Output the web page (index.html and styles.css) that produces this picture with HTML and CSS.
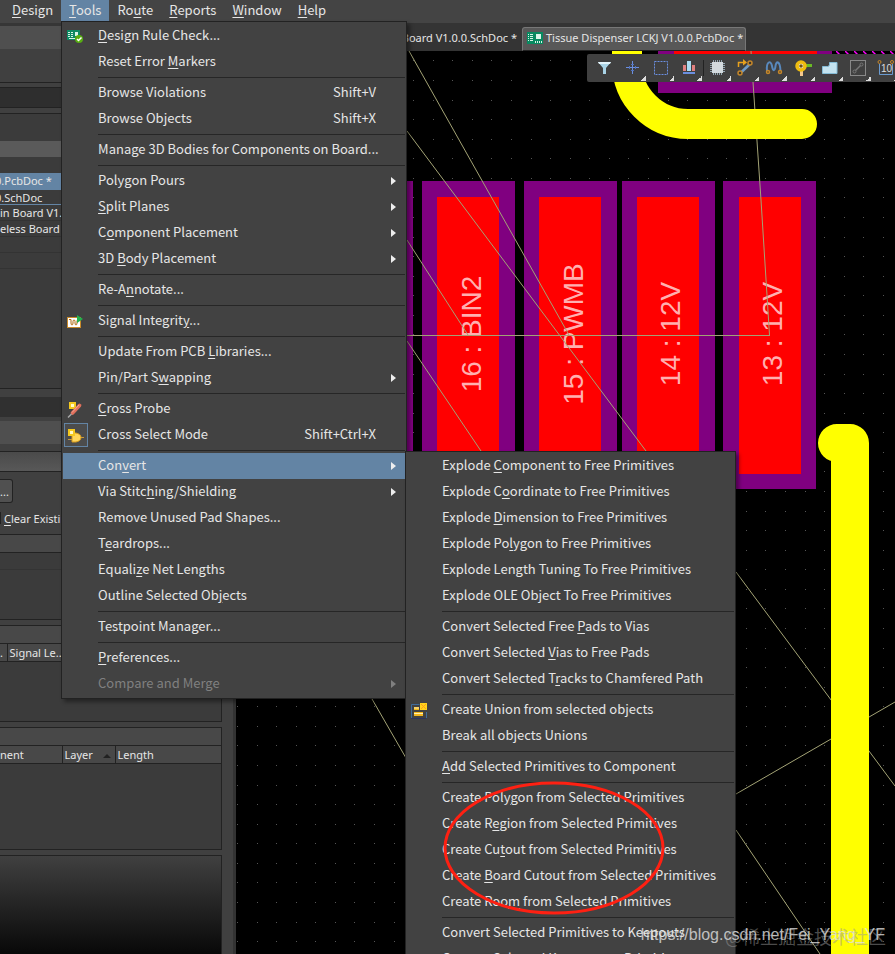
FILE: index.html
```html
<!DOCTYPE html>
<html lang="en">
<head>
<meta charset="utf-8">
<title>PCB Editor</title>
<link rel="stylesheet" href="styles.css">
</head>
<body>
<nav class="menubar">
  <button class="menubar-btn"><u>D</u>esign</button>
  <div class="menubar-slot">
    <button class="menubar-btn open"><u>T</u>ools</button>
    <ul class="menu tools-menu">
      <li><button class="item"><svg class="ico" viewBox="0 0 16 16"><rect y="1" width="13" height="10" fill="#0c8a62"/><path d="M1 3.500h2M1 5.500h2M1 7.500h2M4 3.500h2M4 5.500h2M4 7.500h2M2 9.500h6" stroke="#d8f5e8"/><rect x="8" y="3" width="3" height="4" fill="#d8f5e8"/><circle cx="12" cy="10" r="4" fill="#57ad12"/><path d="M10 10l1.500 1.500 3-3" stroke="#fff" stroke-width="1.500" fill="none"/></svg><span class="label"><u>D</u>esign Rule Check...</span></button></li>
      <li><button class="item"><span class="label">Reset Error <u>M</u>arkers</span></button></li>
      <li class="sep"></li>
      <li><button class="item"><span class="label">Browse Violations</span><span class="key">Shift+V</span></button></li>
      <li><button class="item"><span class="label">Browse Objects</span><span class="key">Shift+X</span></button></li>
      <li class="sep"></li>
      <li><button class="item"><span class="label">Manage 3D Bodies for Components on Board...</span></button></li>
      <li class="sep"></li>
      <li><button class="item sub"><span class="label">Poly<u>g</u>on Pours</span></button></li>
      <li><button class="item sub"><span class="label"><u>S</u>plit Planes</span></button></li>
      <li><button class="item sub"><span class="label">C<u>o</u>mponent Placement</span></button></li>
      <li><button class="item sub"><span class="label">3D <u>B</u>ody Placement</span></button></li>
      <li class="sep"></li>
      <li><button class="item"><span class="label">Re-A<u>n</u>notate...</span></button></li>
      <li class="sep"></li>
      <li><button class="item"><svg class="ico" viewBox="0 0 16 16"><rect x=".5" y="3.500" width="13" height="10" fill="#fff" stroke="#c98a2b"/><path d="M2 5.500h2V9q0 2 1 2t1-2V7.500Q6 6 7 6t1 1.500V9q0 2 1 2t1-2V6.500" fill="none" stroke="#b06a10"/><path d="M10 1l6 4-6 4z" fill="#23b14d"/></svg><span class="label">Signal Integrit<u>y</u>...</span></button></li>
      <li class="sep"></li>
      <li><button class="item"><span class="label">Update From PCB <u>L</u>ibraries...</span></button></li>
      <li><button class="item sub"><span class="label">Pin/Part S<u>w</u>apping</span></button></li>
      <li class="sep"></li>
      <li><button class="item"><svg class="ico" viewBox="0 0 16 16"><rect x="2" y="0" width="7" height="7" fill="#f4c81e"/><rect x="4" y="2" width="3" height="3" fill="#fff8c8"/><path d="M12.500 3.500L5.500 11" stroke="#e0705c" stroke-width="3.600" stroke-linecap="round"/><path d="M12 3L5 10.500" stroke="#f3a596"/><path d="M4.500 12L1 15.500" stroke="#aaa" stroke-width="1.400"/></svg><span class="label"><u>C</u>ross Probe</span></button></li>
      <li><button class="item"><span class="toggled"><svg viewBox="0 0 16 16"><path d="M0 12.500h4M12 10.500h4" stroke="#c99a3c"/><path d="M4 6h4q5 1 5 4.500T8 15H4z" fill="#ffd65a" stroke="#d69a1c"/><rect x="0" y="2" width="7" height="7" fill="#f4c81e"/><rect x="2" y="4" width="3" height="3" fill="#fff8c8"/></svg></span><span class="label">Cross Select Mode</span><span class="key">Shift+Ctrl+X</span></button></li>
      <li class="sep"></li>
      <li class="parent"><button class="item sub active"><span class="label">Con<u>v</u>ert</span></button>
        <ul class="menu convert-menu">
          <li><button class="item"><span class="label">Explode <u>C</u>omponent to Free Primitives</span></button></li>
          <li><button class="item"><span class="label">Explode C<u>o</u>ordinate to Free Primitives</span></button></li>
          <li><button class="item"><span class="label">Explode <u>D</u>imension to Free Primitives</span></button></li>
          <li><button class="item"><span class="label">Explode Po<u>l</u>ygon to Free Primitives</span></button></li>
          <li><button class="item"><span class="label">Explode Length Tuning To Free Primitives</span></button></li>
          <li><button class="item"><span class="label">Explode OLE Object To Free Primitives</span></button></li>
          <li class="sep"></li>
          <li><button class="item"><span class="label">Convert Selected Free <u>P</u>ads to Vias</span></button></li>
          <li><button class="item"><span class="label">Convert Selected <u>V</u>ias to Free Pads</span></button></li>
          <li><button class="item"><span class="label">Convert Selected T<u>r</u>acks to Chamfered Path</span></button></li>
          <li class="sep"></li>
          <li><button class="item"><svg class="ico" viewBox="0 0 16 16"><path d="M.500 15V1.500h8M15.500 9v6" fill="none" stroke="#3f6c9c"/><path d="M0 15.500h15" stroke="#2b3460"/><rect x="3" y="4" width="5" height="3" fill="#f2b61e"/><rect x="3" y="9" width="9" height="4" fill="#f2b61e"/><path d="M3 5h5M3 10.500h9" stroke="#fff0b0"/><rect x="9" y="0" width="7" height="7" fill="#ffd41c"/><path d="M10 1l5 5M15 1l-5 5" stroke="#ff9d1c"/></svg><span class="label">Create Union from selected objects</span></button></li>
          <li><button class="item"><span class="label">Break all objects Unions</span></button></li>
          <li class="sep"></li>
          <li><button class="item"><span class="label"><u>A</u>dd Selected Primitives to Component</span></button></li>
          <li class="sep"></li>
          <li><button class="item"><span class="label">Create Poly<u>g</u>on from Selected Primitives</span></button></li>
          <li><button class="item"><span class="label">Create R<u>e</u>gion from Selected Primitives</span></button></li>
          <li><button class="item"><span class="label">Create Cu<u>t</u>out from Selected Primitives</span></button></li>
          <li><button class="item"><span class="label">Create <u>B</u>oard Cutout from Selected Primitives</span></button></li>
          <li><button class="item"><span class="label">Create Roo<u>m</u> from Selected Primitives</span></button></li>
          <li class="sep"></li>
          <li><button class="item"><span class="label">Convert Selected Primitives to Keepouts</span></button></li>
          <li><button class="item"><span class="label">Convert Selected Keepouts to Primitives</span></button></li>
        </ul>
      </li>
      <li><button class="item sub"><span class="label">Via Stitc<u>h</u>ing/Shielding</span></button></li>
      <li><button class="item"><span class="label">Remove Unused Pad Shapes...</span></button></li>
      <li><button class="item"><span class="label">T<u>e</u>ardrops...</span></button></li>
      <li><button class="item"><span class="label">Equali<u>z</u>e Net Lengths</span></button></li>
      <li><button class="item"><span class="label">Outline Selected Ob<u>j</u>ects</span></button></li>
      <li class="sep"></li>
      <li><button class="item"><span class="label">Testpoint Manager...</span></button></li>
      <li class="sep"></li>
      <li><button class="item"><span class="label"><u>P</u>references...</span></button></li>
      <li><button class="item sub" disabled><span class="label">Compare and Merge</span></button></li>
    </ul>
  </div>
  <button class="menubar-btn">Ro<u>u</u>te</button>
  <button class="menubar-btn"><u>R</u>eports</button>
  <button class="menubar-btn"><u>W</u>indow</button>
  <button class="menubar-btn"><u>H</u>elp</button>
</nav>

<div class="workspace">
  <aside class="side">
    <div class="panels">
      <div class="band"></div>
      <div class="strip"></div>
      <div class="dark-box"></div>
      <section class="projects">
        <div class="grey-row"></div>
        <ul class="files">
          <li class="selected">0.PcbDoc *</li>
          <li class="current">0.SchDoc</li>
          <li class="child">in Board V1.0</li>
          <li class="child">eless Board</li>
          <li></li>
          <li></li>
        </ul>
      </section>
      <div class="search"></div>
      <div class="title-row"></div>
      <div class="gradient-row"></div>
      <div class="controls">
        <button class="more">...</button>
        <label class="check"><input type="checkbox"><span><u>C</u>lear Existing</span></label>
      </div>
      <section class="grid-box classes"><div class="grid-head"></div><div class="grid-line"></div></section>
      <section class="grid-box nets"><div class="grid-head"></div>
        <table><tr><th class="n1">.</th><th>Signal Le...</th></tr></table>
      </section>
      <section class="grid-box prims"><div class="grid-head"></div>
        <table><tr><th class="p1">nent</th><th class="p2">Layer<span class="sort"></span></th><th>Length</th></tr></table>
      </section>
      <div class="preview"></div>
    </div>
  </aside>

  <main class="editor">
    <div class="tabs">
      <button class="tab first">Main Board V1.0.0.SchDoc *</button>
      <button class="tab on"><svg viewBox="0 0 16 12"><rect width="16" height="12" fill="#078a60"/><path d="M1 2.500h1M1 4.500h1M1 6.500h1M1 8.500h1M3 2.500h3M3 4.500h3M3 6.500h3M3 8.500h3" stroke="#d8f5e8"/><path d="M8 10h7" stroke="#d8f5e8" stroke-width="2" stroke-dasharray="1 1"/><rect x="9" y="2" width="5" height="5" fill="#d8f5e8"/></svg>Tissue Dispenser LCKJ V1.0.0.PcbDoc *</button>
    </div>
    <div class="board">
      <svg class="pcb">
        <defs>
          <pattern id="dots" x="237" y="80" width="137" height="137" patternUnits="userSpaceOnUse">
            <path d="M0 .5H137M0 20.500H137M0 39.500H137M0 59.500H137M0 78.500H137M0 98.500H137M0 117.500H137" stroke="#555" stroke-dasharray="1 19 1 18 1 19 1 18 1 19 1 18 1 19"/>
          </pattern>
          <pattern id="hatch" x="836" y="51" width="9" height="9" patternUnits="userSpaceOnUse"><path d="M0 0l5 5" stroke="#f0f" stroke-width="1.500"/></pattern>
        </defs>
        <g transform="translate(-236 -51)">
          <rect x="236" y="51" width="2000" height="2000" fill="url(#dots)"/>
          <rect x="836" y="51" width="600" height="4" fill="url(#hatch)"/>
          <g fill="#800080">
            <rect x="658" y="40" width="174" height="53"/>
            <rect x="320" y="181" width="93" height="308"/>
            <rect x="422" y="181" width="93" height="308"/>
            <rect x="524" y="181" width="93" height="308"/>
            <rect x="622" y="181" width="93" height="308"/>
            <rect x="723" y="181" width="93" height="308"/>
          </g>
          <g fill="#f00">
            <rect x="674" y="40" width="143" height="38"/>
            <rect x="437" y="197" width="62" height="277"/>
            <rect x="539" y="197" width="62" height="277"/>
            <rect x="637" y="197" width="62" height="277"/>
            <rect x="739" y="197" width="62" height="277"/>
          </g>
          <g class="pad-name">
            <text transform="translate(481 334) rotate(-90)">16 : BIN2</text>
            <text transform="translate(583 334) rotate(-90)">15 : PWMB</text>
            <text transform="translate(680 334) rotate(-90)">14 : 12V</text>
            <text transform="translate(782 334) rotate(-90)">13 : 12V</text>
          </g>
          <path d="M409 51L569 335M407 131L646 451M407 240L468 335M407 341L481 451M400 335.500H770M751 51L753 82L761 200L769.500 335M372 699L406 758M736 572L895 786M736 794L895 702M736 830L820 954" fill="none" stroke="#a3a375"/>
          <path d="M627 40V63A61 61 0 0 0 688 124H802" fill="none" stroke="#ff0" stroke-width="30" stroke-linecap="round"/>
          <path d="M837 443H850V2000" fill="none" stroke="#ff0" stroke-width="38" stroke-linecap="round" stroke-linejoin="round"/>
        </g>
      </svg>
      <div class="toolbar">
        <button aria-label="Filter"><svg viewBox="0 0 28 28"><path d="M7 8h13l-5 6v6h-3v-6z" fill="#a9d3e6"/><path d="M7 8h13l-1 2H8z" fill="#e2f3fa"/></svg></button>
        <button class="more-tools" aria-label="Snap"><svg viewBox="0 0 28 28"><path d="M7 13.500h13M13.500 7v13" stroke="#6b8fe0"/><path d="M10.500 12v3M16.500 12v3M12 10.500h3M12 16.500h3" stroke="#5273bd"/></svg></button>
        <button class="more-tools" aria-label="Select"><svg viewBox="0 0 28 28"><rect x="7.500" y="7.500" width="13" height="13" fill="none" stroke="#6b8fe0" stroke-dasharray="2 1"/></svg></button>
        <button class="more-tools" aria-label="Align"><svg viewBox="0 0 28 28"><path d="M8 11h3v6H8zM17 11h3v6h-3z" fill="#e08080"/><path d="M12 7h4v10h-4z" fill="#a9dcf2"/><path d="M8 18h12v2H8z" fill="#6b8fe0"/></svg></button>
        <span class="tool-sep"></span>
        <button class="more-tools" aria-label="Place component"><svg viewBox="0 0 28 28"><path d="M9.500 6v15M11.500 6v15M13.500 6v15M15.500 6v15M17.500 6v15M6 9.500h15M6 11.500h15M6 13.500h15M6 15.500h15M6 17.500h15" stroke="#93a5b0"/><rect x="8" y="8" width="11" height="11" fill="#d3dade"/></svg></button>
        <button class="more-tools" aria-label="Route"><svg viewBox="0 0 28 28"><path d="M6.500 13V8.500H12" fill="none" stroke="#e8a21c" stroke-width="1.500"/><path d="M11 5l4 3.500-4 3z" fill="#e8a21c"/><path d="M9 18.500L18 10" stroke="#6f9cc8" stroke-width="2.500"/><g fill="#403828" stroke="#c4862a" stroke-width="1.500"><circle cx="8" cy="19" r="2"/><circle cx="18" cy="9" r="2"/></g></svg></button>
        <button class="more-tools" aria-label="Tune length"><svg viewBox="0 0 28 28"><path d="M7 17C6 7 11 6 12 12S15 17 15.500 12 20 6 20.500 17" fill="none" stroke="#5889bd" stroke-width="2"/><g fill="#403828" stroke="#c4862a" stroke-width="1.500"><circle cx="8" cy="18" r="1.500"/><circle cx="20" cy="18" r="1.500"/></g></svg></button>
        <button class="more-tools" aria-label="Place via"><svg viewBox="0 0 28 28"><path d="M12 15h3v7h-3z" fill="#f5c88d"/><path d="M18 10h6v3h-6z" fill="#6abb25"/><circle cx="13" cy="12" r="4" fill="#fff" stroke="#eebc10" stroke-width="3.500"/><circle cx="13" cy="12" r="1.800" fill="#70510b"/></svg></button>
        <button class="more-tools" aria-label="Place polygon"><svg viewBox="0 0 28 28"><path d="M6.500 19.500v-7h5q2 0 2-2v-2h7.500v11z" fill="#c4e3f0" stroke="#85bcd7"/></svg></button>
        <button class="more-tools" aria-label="Place line"><svg viewBox="0 0 28 28"><rect x="6.500" y="6.500" width="15" height="15" fill="none" stroke="#888"/><path d="M10 18l8-8" stroke="#777" stroke-width="1.500"/><g fill="#404040" stroke="#777"><circle cx="10.500" cy="17.500" r="1.500"/><circle cx="17.500" cy="10.500" r="1.500"/></g></svg></button>
        <button class="more-tools" aria-label="Dimension"><svg viewBox="0 0 28 28"><path d="M7.500 10v10.500h13V10" fill="none" stroke="#6b9bd0"/><g fill="none" stroke="#c4862a"><circle cx="7.500" cy="8" r="1.500"/><circle cx="20" cy="8" r="1.500"/></g><text class="ten" x="9" y="18">10</text></svg></button>
      </div>
    </div>
  </main>
</div>

<svg class="mark" viewBox="0 0 222 134"><ellipse cx="111" cy="67" rx="109" ry="65" fill="none" stroke="#ff2012" stroke-width="3"/></svg>
<div class="watermark cn">@稀土掘金技术社区</div>
<div class="watermark url">https://blog.csdn.net/Fei_Yang_YF</div>
</body>
</html>
```
FILE: styles.css
```css
* { box-sizing: border-box; }
body {
  margin: 0;
  height: 100vh;
  overflow: hidden;
  position: relative;
  display: flex;
  flex-direction: column;
  background: #404040;
  color: #e6e6e6;
  font: 13px/18px "Noto Sans CJK SC", sans-serif;
}
button {
  border: 0;
  padding: 0;
  margin: 0;
  background: none;
  color: inherit;
  font: inherit;
  text-align: left;
  white-space: nowrap;
}
ul { list-style: none; margin: 0; padding: 0; }
u { text-decoration-thickness: 1px; text-underline-offset: 2px; }

/* menu bar */
.menubar { display: flex; height: 23px; padding-left: 4px; background: #444; flex: none; }
.menubar-slot { position: relative; }
.menubar-btn { height: 21px; padding: 0 8px 2px; line-height: 18px; display: block; }
.menubar-btn.open { background: #6384a4; }

/* drop-down menus */
.menu {
  position: absolute;
  z-index: 5;
  padding: 1px;
  background: #424242;
  border: 1px solid #222;
  box-shadow: 3px 3px 4px rgba(0, 0, 0, .4);
}
.tools-menu { top: 21px; left: 0; width: 346px; }
.convert-menu { top: -2px; left: 100%; width: 331px; }
.parent { position: relative; }
.item {
  display: flex;
  align-items: center;
  position: relative;
  width: 100%;
  height: 26px;
  padding: 0 29px 2px 35px;
}
.item.active { background: #6384a4; }
.item:disabled { color: #808080; }
.label { flex: 1; }
.item.sub::after {
  content: "";
  position: absolute;
  top: 9px;
  right: 9px;
  border: 4px solid transparent;
  border-left: 5px solid #eee;
  border-right: 0;
}
.item.sub:disabled::after { border-left-color: #808080; }
.ico { position: absolute; top: 6px; left: 4px; width: 16px; height: 16px; }
.toggled {
  position: absolute;
  top: 1px;
  left: 1px;
  width: 24px;
  height: 24px;
  padding: 3px;
  background: #4c4c4c;
  border: 1px solid #6384a4;
}
.toggled svg { display: block; width: 16px; height: 16px; }
.sep { height: 5px; padding: 2px 0 0 35px; }
.sep::after { content: ""; display: block; height: 1px; background: #262626; }

/* workspace */
.workspace { flex: 1; min-height: 0; display: flex; }
.side {
  flex: 0 0 236px;
  overflow: hidden;
  border-right: 3px solid #333;
  padding-right: 11px;
  font: 11px "Noto Sans", sans-serif;
}
.panels { height: 100%; display: flex; flex-direction: column; }
.panels > * { flex: none; }
.band { height: 26px; border-top: 3px solid #363636; background: #4f4f4f; }
.strip { height: 34px; border-bottom: 1px solid #222; }
.dark-box { height: 21px; margin: 4px 0 5px; background: #2e2e2e; border: 1px solid #222; border-width: 1px 0; }
.projects { height: 276px; border: 1px solid #222; border-width: 1px 0; background: #3b3b3b; }
.grey-row { height: 16px; margin: 27px 0 16px; background: #5a5a5a; }
.files li { height: 16px; line-height: 16px; border-bottom: 1px solid #333; white-space: nowrap; }
.files .selected { background: #6384a4; height: 17px; border: 0; text-indent: -5px; }
.files .current { height: 15px; border-color: #6384a4; text-indent: -5px; }
.search { height: 20px; margin: 8px 0 4px; background: #303030; }
.title-row { height: 23px; background: #4f4f4f; }
.gradient-row { height: 21px; margin-top: 7px; border: 1px solid #222; border-width: 1px 0; background: linear-gradient(#4a4a4a, #585858); }
.controls { height: 62px; padding-top: 7px; display: flex; flex-direction: column; align-items: flex-start; gap: 7px; }
.more { width: 13px; height: 24px; background: #505050; border: 1px solid #222; border-left: 0; border-radius: 0 3px 3px 0; }
.check { display: flex; align-items: center; gap: 3px; height: 16px; white-space: nowrap; }
.check input { appearance: none; width: 1px; height: 12px; margin: 0; background: #222; }
.grid-box { border: 1px solid #222; border-left: 0; background: #3b3b3b; }
.classes { height: 86px; }
.nets { height: 97px; margin: 5px 0; }
.prims { height: 123px; }
.grid-head { height: 18px; border-bottom: 1px solid #222; background: #484848; }
.grid-line { height: 17px; border-bottom: 1px solid #343434; }
.grid-box table { width: 100%; height: 18px; border-collapse: collapse; background: #484848; border-bottom: 1px solid #222; }
.grid-box th {
  height: 17px;
  padding: 0 0 0 2px;
  line-height: 16px;
  font-weight: normal;
  text-align: left;
  border-left: 1px solid #222;
  white-space: nowrap;
}
.grid-box th:first-child { padding: 0; border-left: 0; }
.n1 { width: 7px; }
.p1 { width: 62px; }
.p2 { width: 53px; }
.sort {
  display: inline-block;
  margin-left: 10px;
  vertical-align: middle;
  border: 4px solid transparent;
  border-top: 0;
  border-bottom-color: #222;
}
.panels .preview { flex: 1; margin-top: 5px; border: 1px solid #222; border-width: 1px 1px 0 0; background: linear-gradient(#404040, #080808); }

/* editor */
.editor { flex: 1; min-width: 0; display: flex; flex-direction: column; }
.tabs { flex: none; height: 28px; display: flex; align-items: flex-end; background: #343434; font: 11px "Noto Sans", sans-serif; }
.tab { height: 24px; line-height: 22px; }
.tab.first { flex: 0 0 286px; padding: 0 5px 2px 0; text-align: right; }
.tab.on {
  display: flex;
  align-items: center;
  gap: 3px;
  padding: 0 2px 2px 4px;
  background: #585858;
  border: 1px solid #777;
  border-bottom-color: #222;
  border-radius: 3px 3px 0 0;
}
.tab svg { width: 16px; height: 12px; }
.board { position: relative; flex: 1; min-height: 0; overflow: hidden; background: #000; }
.pcb { display: block; width: 100%; height: 100%; }
.pad-name {
  fill: #ffb0b0;
  font: 28px "Liberation Sans", sans-serif;
  text-anchor: middle;
}
.toolbar {
  position: absolute;
  top: 3px;
  left: 351px;
  right: 0;
  height: 28px;
  display: flex;
  padding-left: 4px;
  background: #404040;
  border-radius: 2px 0 0 2px;
  overflow: hidden;
}
.toolbar button { position: relative; flex: none; width: 28px; height: 28px; }
.toolbar svg { display: block; width: 28px; height: 28px; }
.more-tools::after {
  content: "";
  position: absolute;
  right: 1px;
  bottom: 1px;
  width: 5px;
  height: 5px;
  background: linear-gradient(135deg, transparent 50%, #ddd 50%);
}
.tool-sep { flex: none; width: 1px; margin: 6px 0; background: #222; }
.ten { font: 10px "Liberation Sans", sans-serif; fill: #ddd; }

/* overlays */
.mark { position: absolute; z-index: 6; left: 443px; top: 781px; width: 222px; height: 134px; }
.watermark { position: absolute; z-index: 7; white-space: nowrap; line-height: 24px; }
.cn { right: 9px; bottom: 6px; font-size: 18px; color: rgba(150, 150, 150, .5); }
.url { right: 10px; bottom: 7px; font: 16px/24px "Liberation Sans", sans-serif; color: rgba(225, 225, 225, .8); }
```
